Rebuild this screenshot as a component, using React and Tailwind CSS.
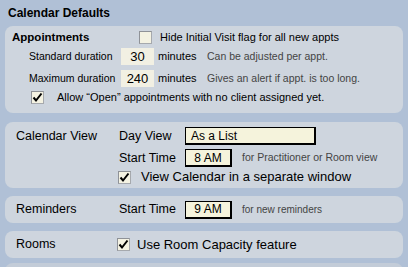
import React from "react";

const Check = ({ checked }) => (
  <span className="inline-flex w-[13px] h-[13px] shrink-0 items-center justify-center bg-[#f4f2e2] border border-[#a6a9ad] border-t-[#8f9297] border-l-[#8f9297]">
    {checked && (
      <svg width="11" height="11" viewBox="0 0 11 11">
        <path d="M1.5 5.5 L4 8.5 L9.5 1.5" fill="none" stroke="#000" strokeWidth="2" />
      </svg>
    )}
  </span>
);

const Box = ({ children, w }) => (
  <div className={`${w} h-[18px] bg-[#f5f3dc] border border-black border-r-2 border-b-2 flex items-center text-[12px] text-black leading-none whitespace-nowrap`}>
    {children}
  </div>
);

export default function App() {
  return (
    <div className="w-[408px] h-[267px] overflow-hidden bg-[#b0c0d6] text-black whitespace-nowrap" style={{ fontFamily: '"Liberation Sans", Arial, sans-serif' }}>
      <div className="pl-[8px] pt-[6px] h-[26px] text-[12px] font-bold leading-[15px]">Calendar Defaults</div>
      <div className="flex flex-col">
        {/* Appointments */}
        <div className="mx-[5px] h-[87px] rounded-[8px] bg-[#ced5de]">
          <div className="flex items-center h-[20px] pt-[3px]">
            <div className="pl-[7px] w-[134px] text-[11.5px] font-bold">Appointments</div>
            <Check />
            <span className="ml-[8px] text-[11px]">Hide Initial Visit flag for all new appts</span>
          </div>
          <div className="flex items-center mt-[2px] h-[17px]">
            <div className="pl-[24px] w-[116px] text-[10.5px]">Standard duration</div>
            <div className="w-[33px] h-[17px] bg-[#f2f0e3] flex items-center justify-center text-[13px]">30</div>
            <span className="ml-[4px] text-[11px] w-[49px]">minutes</span>
            <span className="text-[10.5px] text-[#444]">Can be adjusted per appt.</span>
          </div>
          <div className="flex items-center mt-[5px] h-[17px]">
            <div className="pl-[24px] w-[116px] text-[10.5px]">Maximum duration</div>
            <div className="w-[33px] h-[17px] bg-[#f2f0e3] flex items-center justify-center text-[13px]">240</div>
            <span className="ml-[4px] text-[11px] w-[49px]">minutes</span>
            <span className="text-[10.5px] text-[#444]">Gives an alert if appt. is too long.</span>
          </div>
          <div className="flex items-center mt-[3px] h-[14px] pl-[26px]">
            <Check checked />
            <span className="ml-[13px] text-[11px]">Allow “Open” appointments with no client assigned yet.</span>
          </div>
        </div>

        {/* Calendar View */}
        <div className="mx-[5px] mt-[9px] h-[66px] rounded-[8px] bg-[#ced5de]">
          <div className="flex items-center h-[18px] mt-[5px]">
            <div className="pl-[11px] w-[114px] text-[12.5px]">Calendar View</div>
            <div className="w-[66px] text-[12.5px]">Day View</div>
            <Box w="w-[131px]"><span className="pl-[5px]">As a List</span></Box>
          </div>
          <div className="flex items-center h-[18px] mt-[4px]">
            <div className="pl-[114px] w-[180px] text-[12.5px]">Start Time</div>
            <Box w="w-[47px]"><span className="w-full text-center">8 AM</span></Box>
            <span className="ml-[10px] text-[10.5px] text-[#444]">for Practitioner or Room view</span>
          </div>
          <div className="flex items-center h-[14px] mt-[3px] pl-[113px]">
            <Check checked />
            <span className="ml-[10px] text-[13px]">View Calendar in a separate window</span>
          </div>
        </div>

        {/* Reminders */}
        <div className="mx-[5px] mt-[8px] h-[27px] rounded-[8px] bg-[#ced5de] flex items-center">
          <div className="pl-[11px] w-[114px] text-[12.5px]">Reminders</div>
          <div className="w-[66px] text-[12.5px]">Start Time</div>
          <Box w="w-[47px]"><span className="w-full text-center">9 AM</span></Box>
          <span className="ml-[10px] text-[10px] text-[#444]">for new reminders</span>
        </div>

        {/* Rooms */}
        <div className="mx-[5px] mt-[8px] h-[27px] rounded-[8px] bg-[#ced5de] flex items-center">
          <div className="pl-[11px] w-[112px] text-[12.5px]">Rooms</div>
          <Check checked />
          <span className="ml-[7px] text-[13px]">Use Room Capacity feature</span>
        </div>

        <div className="mx-[5px] mt-[5px] h-[20px] rounded-t-[8px] bg-[#c3ccd8]"></div>
      </div>
    </div>
  );
}
